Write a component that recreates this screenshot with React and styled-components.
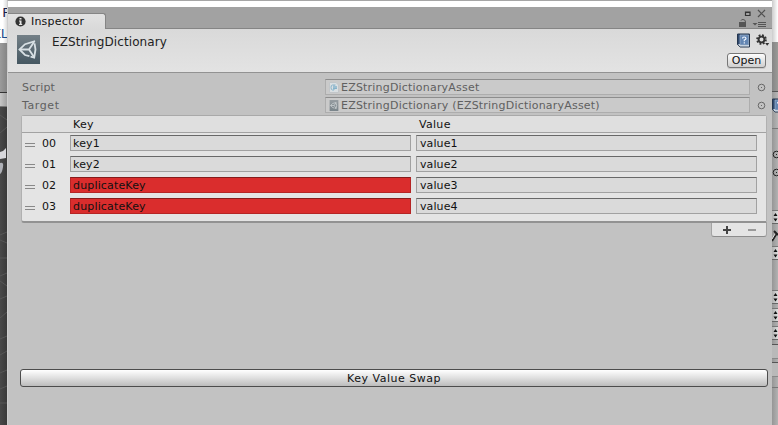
import React from "react";
import styled, { createGlobalStyle } from "styled-components";

const Global = createGlobalStyle`
  * { box-sizing: border-box; }
  body { margin: 0; overflow: hidden; background: #fff; font-family: "DejaVu Sans", sans-serif; font-size: 11px; color: #111; }
  svg { display: block; flex: none; }
`;
const Screen = styled.div`display: grid; grid-template-columns: 7px 765px 6px; width: 778px; height: 425px; overflow: hidden;`;
const Strip = styled.div`display: flex; flex-direction: column; overflow: hidden; height: 425px;`;
const Band = styled.div`
  flex: none; height: ${p => p.$h}px; background: ${p => p.$bg || "transparent"}; overflow: hidden;
  ${p => p.$top && `border-top: 1px solid ${p.$top};`}
  ${p => p.$bottom && `border-bottom: 1px solid ${p.$bottom};`}
`;
const Code = styled.div`
  display: flex; justify-content: flex-end; height: 21px; line-height: 25px; font-size: 13px; white-space: pre;
  color: ${p => p.$c}; margin-right: ${p => p.$mr}px;
`;
const Label = styled.span`
  white-space: pre; font-size: ${p => p.$size || 11}px; letter-spacing: ${p => p.$ls || 0}px; color: ${p => p.$c || "#111"};
`;
const Win = styled.main`
  height: 425px; background: #c2c2c2; border-top: 1px solid #a6a6a6; border-left: 1px solid #cecece; display: flex; flex-direction: column;
`;
const Backdrop = styled.div`height: 6px; flex: none; background: #fff;`;
const TabBar = styled.div`
  height: 22px; flex: none; display: flex; justify-content: space-between; align-items: flex-end;
  background: #a2a2a2; border-bottom: 1px solid #858585;
`;
const Tab = styled.div`
  height: 16px; width: 98px; margin-bottom: -1px; display: flex; align-items: center; gap: 5px; padding-left: 7px;
  border-top: 1px solid #858585; border-right: 1px solid #858585; border-radius: 0 3px 0 0; background: linear-gradient(#e2e2e2, #d9d9d9);
`;
const WindowButtons = styled.div`display: flex; height: 21px; padding-right: 4px;`;
const Header = styled.header`
  height: 44px; flex: none; display: flex; border-bottom: 1px solid #929292; background: linear-gradient(#d9d9d9, #e3e3e3);
  padding: 6px 6px 0 9px;
`;
const Title = styled.div`flex: 1; padding-left: 12px; line-height: 14px;`;
const Actions = styled.div`display: flex; flex-direction: column; align-items: flex-end; gap: 5px;`;
const IconRow = styled.div`display: flex; gap: 6px; margin-right: -4px; margin-top: -2px; svg + svg { margin-top: 1px; }`;
const OpenButton = styled.button`
  width: 39px; height: 15px; padding: 0; border: 1px solid #777; border-radius: 3px; background: linear-gradient(#fdfdfd, #cfcfcf);
  font: inherit; line-height: 13px; text-align: center; color: #000; box-shadow: 0 1px #c9c9c9;
`;
const Body = styled.section`flex: 1; padding: 6px 4px 0 13px; display: flex; flex-direction: column;`;
const Property = styled.div`display: grid; grid-template-columns: 304px 425px 1fr; height: 16px; margin: 0 0 2px 0; align-items: center;`;
const PropertyName = styled.div`padding-left: 1px; line-height: 15px;`;
const ObjectField = styled.div`
  height: 16px; display: flex; align-items: center; gap: 2px; padding-left: 3px; background: #cacaca;
  border: 1px solid #adadad; border-top-color: #8d8d8d; line-height: 15px; svg { opacity: .6; }
`;
const Picker = styled.div`padding-left: 7px;`;
const List = styled.div`
  width: 746px; height: 108px; border: 1px solid #b0b0b0; border-bottom: 2px solid #929292; border-top-color: #a9a9a9;
  border-radius: 3px 3px 0 3px; background: #e4e4e4;
`;
const ListHeader = styled.div`
  height: 17px; display: grid; grid-template-columns: 346px 1fr; padding-left: 51px; line-height: 17px;
  background: #dfdfdf; border-bottom: 1px solid #a2a2a2;
`;
const Rows = styled.div`display: flex; flex-direction: column; gap: 5px; padding-top: 2px;`;
const Row = styled.div`display: grid; grid-template-columns: 20px 28px 341px 341px; height: 16px; align-items: center;`;
const Handle = styled.div`width: 10px; height: 4px; margin: 3px 0 0 3px; border-top: 1px solid #888; border-bottom: 1px solid #888;`;
const Input = styled.div`
  height: 16px; padding-left: ${p => p.$second ? 3 : 2}px; line-height: 15px; margin-left: ${p => p.$second ? 5 : 0}px; margin-right: ${p => p.$second ? -5 : 0}px;
  background: ${p => p.$bad ? "#da2d2d" : "#dadada"};
  border: 1px solid ${p => p.$bad ? "#b52525" : "#a1a1a1"}; border-top-color: ${p => p.$bad ? "#861c1c" : "#686868"};
`;
const Footer = styled.div`
  align-self: flex-end; width: 56px; height: 14px; margin-right: 1px; display: flex; align-items: center; justify-content: space-between; padding: 0 9px 0 10px;
  background: #e4e4e4; border: 1px solid #a4a4a4; border-top: 0; border-bottom-color: #8c8c8c; border-radius: 0 0 3px 3px;
`;
const SwapButton = styled.button`
  flex: none; width: 748px; height: 18px; margin: 132px 0 0 -1px; padding: 1px 0 0; border: 1px solid #4c4c4c; border-radius: 3px;
  background: linear-gradient(#fff, #e2e2e2 45%, #bcbcbc); font: inherit; line-height: 15px; text-align: center;
`;

const Unity = ({ w = 23, h = 29 }) => (
  <svg width={w} height={h} viewBox="0 0 23 29">
    <defs><linearGradient id="slate" x2="0" y2="1"><stop stopColor="#748087" /><stop offset="1" stopColor="#455761" /></linearGradient></defs>
    <rect width="23" height="29" fill="url(#slate)" />
    <path d="M2.5 14.5 8 9.2 17.2 6.5 18.5 14.5 17.2 22.5 8 20Z" fill="none" stroke="#d8e0e4" strokeWidth="1.8" strokeDasharray="18 1.2" />
    <path d="M2.5 14.5H12M12 14.5 17 7M12 14.5 17 22" stroke="#d8e0e4" strokeWidth="1.8" />
  </svg>
);
const Script = () => (
  <svg width="10" height="11" viewBox="0 0 10 11"><path d="M.5.5H7L9.5 3V10.5H.5Z" fill="#e6eef2" stroke="#bdc5c9" /><path d="M6.5 3H3.5Q2 3 2 5.5T3.5 8H5M5 3V8M7 4V7M4 5H8M4 6.5H8" fill="none" stroke="#5aa5cd" /></svg>
);
const Info = () => (
  <svg width="11" height="11" viewBox="0 0 11 11"><circle cx="5.5" cy="5.5" r="5.1" fill="#343434" /><path d="M4.5 2H6.5V3.5H4.5ZM4 4.5H6.5V8H7.2V9H4V8H4.7V5.5H4Z" fill="#e5e5e5" /></svg>
);
const Controls = () => (
  <svg width="34" height="21" viewBox="0 0 34 21">
    <path d="M11.5 5H16V8.5H11.5ZM11 5.5H16" fill="none" stroke="#333" strokeWidth="1.2" />
    <path d="M24 3 31 10M31 3 24 10" stroke="#505050" strokeWidth="1.2" />
    <path d="M5 15H12V20H5Z" fill="#555" /><path d="M7 13.6Q7.2 12.5 9 12.5 11.5 12.5 11.5 15" fill="none" stroke="#555" />
    <path d="M18.5 16H23.5L21 18.5Z" fill="#555" /><path d="M24 15.5H32M24 17.5H32M24 19.5H32" stroke="#555" />
  </svg>
);
const Book = () => (
  <svg width="13" height="15" viewBox="0 0 13 15">
    <path d="M.5 1H12.5V14H3L.5 11.5Z" fill="#304a70" stroke="#25364e" />
    <path d="M1 11.5 3 13.5H12V12L2.5 11Z" fill="#dce3e9" /><path d="M3 2H11.5V12H3Z" fill="#6386b3" stroke="#a0b6cd" strokeWidth=".7" />
    <path d="M5.5 5.5Q5.5 4 7.2 4T9 5.5Q9 6.5 7.3 7V8.3M7.3 9.2V10.4" fill="none" stroke="#f2f7ff" strokeWidth="1.2" />
  </svg>
);
const Gear = () => (
  <svg width="14" height="14" viewBox="0 0 14 14">
    <circle cx="5.5" cy="5.5" r="4.3" fill="none" stroke="#333" strokeWidth="2" strokeDasharray="1.8 1.577" />
    <circle cx="5.5" cy="5.5" r="2.9" fill="none" stroke="#333" strokeWidth="1.9" /><path d="M9.2 9H13.2L11.2 11.7Z" fill="#333" />
  </svg>
);
const Target = ({ c = "#686868" }) => (
  <svg width="9" height="9" viewBox="0 0 9 9"><circle cx="4.5" cy="4.5" r="3.3" fill="none" stroke={c} /><rect x="4" y="4" width="1" height="1" fill={c} /></svg>
);
const Arrows = () => (
  <svg width="6" height="13" viewBox="0 0 6 13"><path d="M1.5 5H5.5L3.5 2ZM1.5 7.5H5.5L3.5 10.5Z" fill="#111" /></svg>
);
const Popup = () => <Band $h={14} $bg="linear-gradient(90deg,#b0b0b0,#dedede)" $top="#777" $bottom="#666"><Arrows /></Band>;

const entries = [["00", "key1", "value1"], ["01", "key2", "value2"], ["02", "duplicateKey", "value3", true], ["03", "duplicateKey", "value4", true]];

export default function App() {
  return <><Global /><Screen>
    <Strip>
      <Band $h={43} $bg="linear-gradient(90deg,#fff 40%,#ddd)">
        <Code $c="#16204b" $mr={-3}>P</Code><Code $c="#1d4c8c" $mr={-1}>KL</Code>
      </Band>
      <Band $h={49} $bg="linear-gradient(90deg,#9b9b9b,#858585)" />
      <Band $h={15} $bg="linear-gradient(90deg,#c6c6c6,#a0a0a0)" $top="#333" $bottom="#777" />
      <Band $h={318} $bg="linear-gradient(90deg,#484848,#393939)">
        <svg width="7" height="318" viewBox="0 0 7 318">
          <path d="M0 8 7 13M0 26 7 20M0 128 7 125M0 133 7 136M0 151H7M0 169 7 166M0 174 7 179M0 192 7 189M0 211 7 205M0 232 7 229M0 248 7 244M0 266 7 263M0 282 7 279M0 296H7" stroke="#5a5a5a" fill="none" strokeWidth=".8" />
          <path d="M0 45 3 44 6 41V51L0 52Z" fill="#d8d8dc" /><path d="M0 56Q4 55 3 60 2 66 0 67Z" fill="#aeb0b6" />
        </svg>
      </Band>
    </Strip>
    <Win>
      <Backdrop />
      <TabBar>
        <Tab><Info /><Label $ls={0.2}>Inspector</Label></Tab>
        <WindowButtons><Controls /></WindowButtons>
      </TabBar>
      <Header>
        <Unity />
        <Title><Label $size={12} $ls={0.1} $c="#222">EZStringDictionary</Label></Title>
        <Actions><IconRow><Book /><Gear /></IconRow><OpenButton><Label>Open</Label></OpenButton></Actions>
      </Header>
      <Body>
        <Property><PropertyName><Label $ls={0.2} $c="#606060">Script</Label></PropertyName><ObjectField><Script /><Label $ls={0.2} $c="#606060">EZStringDictionaryAsset</Label></ObjectField><Picker><Target /></Picker></Property>
        <Property><PropertyName><Label $ls={0.6} $c="#606060">Target</Label></PropertyName><ObjectField><Unity w={10} h={11} /><Label $ls={0.21} $c="#606060">EZStringDictionary (EZStringDictionaryAsset)</Label></ObjectField><Picker><Target /></Picker></Property>
        <List>
          <ListHeader><Label $ls={0.3}>Key</Label><Label $ls={0.3}>Value</Label></ListHeader>
          <Rows>{entries.map(([n, key, value, bad]) => <Row key={n}>
            <Handle /><Label>{n}</Label><Input $bad={bad}><Label $ls={0.16}>{key}</Label></Input><Input $second><Label $ls={0.1}>{value}</Label></Input>
          </Row>)}</Rows>
        </List>
        <Footer>
          <svg width="10" height="10" viewBox="0 0 10 10"><path d="M1 5H9M5 1V9" stroke="#444" strokeWidth="2" /></svg>
          <svg width="10" height="10" viewBox="0 0 10 10"><path d="M1 5H9" stroke="#999" strokeWidth="2" /></svg>
        </Footer>
        <SwapButton><Label $ls={0.5}>Key Value Swap</Label></SwapButton>
      </Body>
    </Win>
    <Strip>
      <Band $h={42} $bg="linear-gradient(90deg,#ccc,#fff)" />
      <Band $h={49} $bg="linear-gradient(90deg,#858585,#9b9b98)" />
      <Band $h={38} $bg="linear-gradient(90deg,#999,#b7b7b7)" $top="#555" $bottom="#777"><Band $h={6} /><Book /></Band>
      <Band $h={296} $bg="linear-gradient(90deg,#969696,#b2b2b2)">
        <Band $h={21} /><Target c="#222" /><Band $h={9} /><Target c="#222" /><Band $h={33} />
        <Popup />
        <Band $h={22}><svg width="6" height="22" viewBox="0 0 6 22"><path d="M0 17 5 9M2 7 6 11" stroke="#222" strokeWidth="2" /><path d="M0 15 3 10" stroke="#ddd" /></svg></Band>
        <Popup /><Band $h={30} /><Popup /><Band $h={4} /><Popup /><Band $h={4} /><Popup />
        <Band $h={4} /><Band $h={15} $bg="#b9b9b9" $top="#555" $bottom="#888" />
        <Band $h={3} /><Band $h={15} $bg="#b9b9b9" $top="#555" $bottom="#888" />
        <Band $h={11} $bottom="#777" />
      </Band>
    </Strip>
  </Screen></>;
}
